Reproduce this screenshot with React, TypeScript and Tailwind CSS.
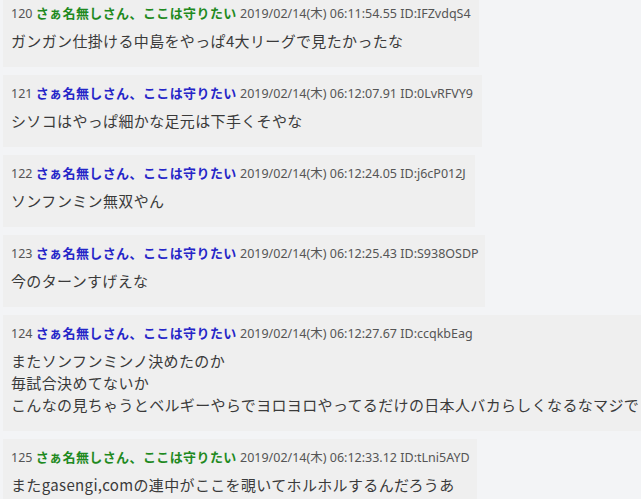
const posts = [
  {
    no: 120,
    name: "さぁ名無しさん、ここは守りたい",
    green: true,
    date: "2019/02/14(木) 06:11:54.55",
    id: "IFZvdqS4",
    body: ["ガンガン仕掛ける中島をやっぱ4大リーグで見たかったな"],
    width: "w-[476px]",
  },
  {
    no: 121,
    name: "さぁ名無しさん、ここは守りたい",
    green: false,
    date: "2019/02/14(木) 06:12:07.91",
    id: "0LvRFVY9",
    body: ["シソコはやっぱ細かな足元は下手くそやな"],
    width: "w-[479px]",
  },
  {
    no: 122,
    name: "さぁ名無しさん、ここは守りたい",
    green: false,
    date: "2019/02/14(木) 06:12:24.05",
    id: "j6cP012J",
    body: ["ソンフンミン無双やん"],
    width: "w-[472px]",
  },
  {
    no: 123,
    name: "さぁ名無しさん、ここは守りたい",
    green: false,
    date: "2019/02/14(木) 06:12:25.43",
    id: "S938OSDP",
    body: ["今のターンすげえな"],
    width: "w-[482px]",
  },
  {
    no: 124,
    name: "さぁ名無しさん、ここは守りたい",
    green: false,
    date: "2019/02/14(木) 06:12:27.67",
    id: "ccqkbEag",
    body: [
      "またソンフンミンノ決めたのか",
      "毎試合決めてないか",
      "こんなの見ちゃうとベルギーやらでヨロヨロやってるだけの日本人バカらしくなるなマジで",
    ],
    width: "w-[660px]",
  },
  {
    no: 125,
    name: "さぁ名無しさん、ここは守りたい",
    green: true,
    date: "2019/02/14(木) 06:12:33.12",
    id: "tLni5AYD",
    body: ["またgasengi,comの連中がここを覗いてホルホルするんだろうあ"],
    width: "w-[474px]",
  },
];

function Post({ post }: { post: (typeof posts)[number] }) {
  return (
    <div className={`${post.width} shrink-0 bg-[#efefef] pt-[9px] pb-[15px] pl-2 pr-1`}>
      <div className="h-[18px] whitespace-nowrap text-[12.5px] leading-[18px] text-[#555] font-['Noto_Sans','Noto_Sans_CJK_JP',sans-serif]">
        <span>{post.no} </span>
        <span
          className={`text-[13px] font-bold tracking-[0.4px] ${post.green ? "text-[#1f8a1f]" : "text-[#2626c8]"}`}
        >
          {post.name}
        </span>
        <span> {post.date} ID:{post.id}</span>
      </div>
      <div className="mt-2 whitespace-nowrap text-[15px] leading-[22px] tracking-[0.35px] text-[#3a3a3a] font-['Noto_Sans_CJK_JP',sans-serif]">
        {post.body.map((line, i) => (
          <div key={i}>{line}</div>
        ))}
      </div>
    </div>
  );
}

export default function App() {
  return (
    <div className="h-[499px] w-[641px] overflow-hidden bg-[#f3f4f6]">
      <div className="mt-[-5px] flex flex-col gap-2 pl-[3px]">
        {posts.map((p) => (
          <Post key={p.no} post={p} />
        ))}
      </div>
    </div>
  );
}
